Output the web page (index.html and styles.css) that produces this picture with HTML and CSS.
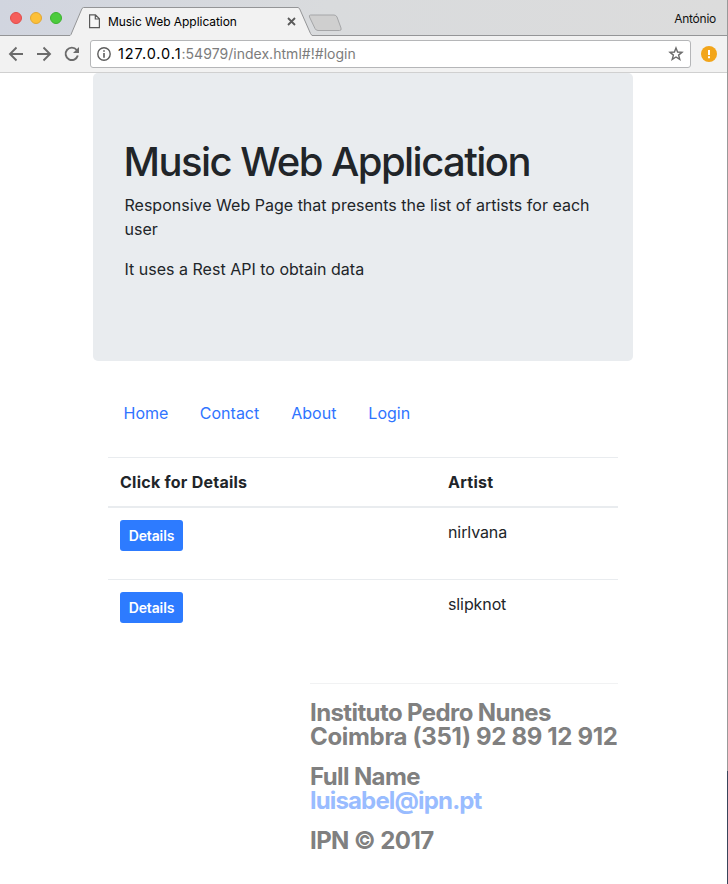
FILE: index.html
```html
<!DOCTYPE html>
<html lang="en">
<head>
<meta charset="utf-8">
<title>Music Web Application</title>
<link rel="stylesheet" href="styles.css">
</head>
<body>
<div class="window">
  <header class="tabstrip">
    <div class="lights"><i class="light red"></i><i class="light yellow"></i><i class="light green"></i></div>
    <div class="tab">
      <svg class="tab-shape" width="244" height="29" viewBox="0 0 244 29"><path d="M0 28.500 L1 27.500 L12 1.500 L13.500 .5 H228 L229.500 1.500 L240.500 26.500 L242 28.500 H244 V29 H0Z" fill="#f2f2f2"/><path d="M0 28.500 L1 27.500 L12 1.500 L13.500 .5 H228 L229.500 1.500 L240.500 26.500 L242 28.500 H244" fill="none" stroke="#949597"/></svg>
      <svg class="page-icon" width="12" height="15" viewBox="0 0 12 15"><path d="M.6 .8H6.500L10.400 4.800V13.700H.6ZM6.300 .8V5H10.400" fill="#f7f7f7" stroke="#5a5a5a" stroke-width="1.200"/></svg>
      <span class="tab-title">Music Web Application</span>
      <svg class="tab-close" width="9" height="9" viewBox="0 0 9 9"><path d="M1 1L8 8M8 1L1 8" stroke="#5a5a5a" stroke-width="1.800"/></svg>
    </div>
    <svg class="new-tab" width="35" height="18" viewBox="0 0 35 18"><path d="M2.500 1H26Q28 1 29 3L33 14Q33.800 16.500 31.500 16.500H10Q8 16.500 7 14.500L1.500 3Q.8 1 2.500 1Z" fill="#cfcfcf" stroke="#a5a6a8"/></svg>
    <span class="profile">António</span>
  </header>
  <div class="toolbar">
    <svg class="nav-icons" width="72" height="18" viewBox="0 0 72 18" fill="none" stroke="#6b6b6b" stroke-width="1.900"><path d="M15 9H2M8.500 2.500L2 9L8.500 15.500M29 9H42M35.500 2.500L42 9L35.500 15.500"/><path d="M68.700 5A6.200 6.200 0 1 0 69.800 10.500"/><path d="M71 2V8H65Z" fill="#6b6b6b" stroke="none"/></svg>
    <div class="address">
      <svg class="info" width="14" height="14" viewBox="0 0 14 14"><circle cx="7" cy="7" r="6.200" fill="none" stroke="#5d5d5d" stroke-width="1.400"/><path d="M6.200 3.200h1.600v1.600H6.200zM6.200 6h1.600v4.800H6.200z" fill="#5d5d5d"/></svg>
      <span class="url"><b>127.0.0.1</b>:54979/index.html#!#login</span>
      <svg class="star" width="16" height="16" viewBox="0 0 16 16"><path d="M8 1.900L9.600 6L14 6.300L10.600 9.100L11.800 13.400L8 11L4.200 13.400L5.400 9.100L2 6.300L6.400 6Z" fill="none" stroke="#6b6b6b" stroke-width="1.400"/></svg>
    </div>
    <svg class="alert" width="16" height="16" viewBox="0 0 16 16"><circle cx="8" cy="8" r="8" fill="#f2a51a"/><path d="M7 4h2v5H7zM7 10.300h2v2H7z" fill="#fff"/></svg>
  </div>
  <main class="container">
    <section class="jumbotron">
      <h1>Music Web Application</h1>
      <p>Responsive Web Page that presents the list of artists for each<br>user</p>
      <p>It uses a Rest API to obtain data</p>
    </section>
    <div class="content">
      <nav class="nav"><a>Home</a><a>Contact</a><a>About</a><a>Login</a></nav>
      <table class="table">
        <thead><tr><th class="details-col">Click for Details</th><th>Artist</th></tr></thead>
        <tbody>
          <tr><td><button class="btn">Details</button></td><td>nirlvana</td></tr>
          <tr><td><button class="btn">Details</button></td><td>slipknot</td></tr>
        </tbody>
      </table>
      <footer class="footer">
        <h4>Instituto Pedro Nunes<br><span class="phone">Coimbra (351) 92 89 12 912</span></h4>
        <h4>Full Name<br><a>luisabel@ipn.pt</a></h4>
        <h4>IPN © 2017</h4>
      </footer>
    </div>
  </main>
</div>
</body>
</html>
```

FILE: styles.css
```css
* { box-sizing: border-box; }
body { margin: 0; font: 16px/24px Inter, "Liberation Sans", sans-serif; color: #212529; background: #fff; }
svg { display: block; flex: none; }
.window { position: relative; width: 728px; height: 884px; overflow: hidden; }
.window::after { content: ""; position: absolute; right: 0; top: 0; width: 1px; height: 884px; background: linear-gradient(#999 771px, #39465b 771px); }

.tabstrip { position: relative; display: flex; height: 36px; background: linear-gradient(90deg, #d1d5df, #d9dbdd 45%, #dcdcdc); border-bottom: 1px solid #949597; }
.lights { display: flex; gap: 8px; padding: 12px 0 0 10px; width: 70px; flex: none; }
.light { width: 12px; height: 12px; border-radius: 50%; flex: none; }
.red { background: #f55f5c; border: 1px solid #e34c49; }
.yellow { background: #fcc038; border: 1px solid #e2a732; }
.green { background: #4ccb3d; border: 1px solid #3bb32e; }
.tab { position: relative; display: flex; width: 244px; height: 29px; margin-top: 7px; align-items: center; padding-left: 19px; flex: none; z-index: 1; }
.tab-shape { position: absolute; left: 0; top: 0; }
.page-icon, .tab-title, .tab-close { position: relative; }
.tab-title { margin-left: 7px; font-size: 12px; letter-spacing: -.05px; color: #000; flex: 1; white-space: nowrap; }
.tab-close { margin-right: 18.5px; }
.new-tab { margin: 14px 0 0 -6px; }
.profile { margin: 7px 12px 0 auto; font-size: 12px; letter-spacing: -.25px; color: #111; }

.toolbar { display: flex; align-items: center; height: 37px; background: #f2f2f2; border-bottom: 1px solid #d0d0d0; padding: 0 11px 0 8px; }
.nav-icons { width: 72px; }
.address { display: flex; align-items: center; width: 601px; height: 28px; margin-left: 10px; padding: 0 6px; background: #fff; border: 1px solid #b5b6b8; border-radius: 3px; }
.url { margin-left: 7px; font-size: 14px; letter-spacing: .03px; color: #7c7c7c; flex: 1; }
.url b { font-weight: 400; font-size: 14.5px; letter-spacing: .93px; color: #000; }
.alert { margin-left: 10px; }

.container { width: 540px; margin-left: 93px; }
.jumbotron { height: 288px; padding: 65px 31px 63px 31.5px; background: #e9ecef; border-radius: 5px; margin-bottom: 32px; }
h1 { margin: 0 0 7px -1px; font-size: 40px; line-height: 48px; font-weight: 500; letter-spacing: -1.55px; white-space: nowrap; }
p { margin: 0 0 16px; letter-spacing: .01px; white-space: nowrap; }
.content { padding: 0 15px; }
.nav { display: flex; margin-bottom: 24px; }
.nav a { padding: 8px 16px; letter-spacing: 0; color: #2f74ff; }
.nav a:first-child { padding: 8px 15.5px; }
.table { width: 510px; table-layout: fixed; border-collapse: separate; border-spacing: 0; }
th, td { padding: 12px; text-align: left; vertical-align: top; }
th { border-top: 1px solid #e9ecef; border-bottom: 2px solid #e9ecef; font-weight: 700; letter-spacing: .25px; }
td { letter-spacing: -.1px; }
.details-col { width: 328px; }
tbody td { height: 71px; }
tbody tr + tr td { height: 72px; border-top: 1px solid #e9ecef; }
.btn { display: block; width: 63px; height: 31px; padding: 0; border: 0; border-radius: 3px; background: #2d7bff; color: #fff; font: 600 14px/31px Inter, sans-serif; letter-spacing: -.15px; }
.footer { width: 308px; margin: 32px 0 0 auto; padding-top: 17px; border-top: 1px solid #f1f2f3; }
h4 { margin: 0 0 16px; font-size: 24px; line-height: 24px; font-weight: 700; letter-spacing: -.6px; color: #808080; white-space: nowrap; }
.phone { letter-spacing: -.32px; }
h4 a { color: #99bcff; letter-spacing: -.84px; }
```
